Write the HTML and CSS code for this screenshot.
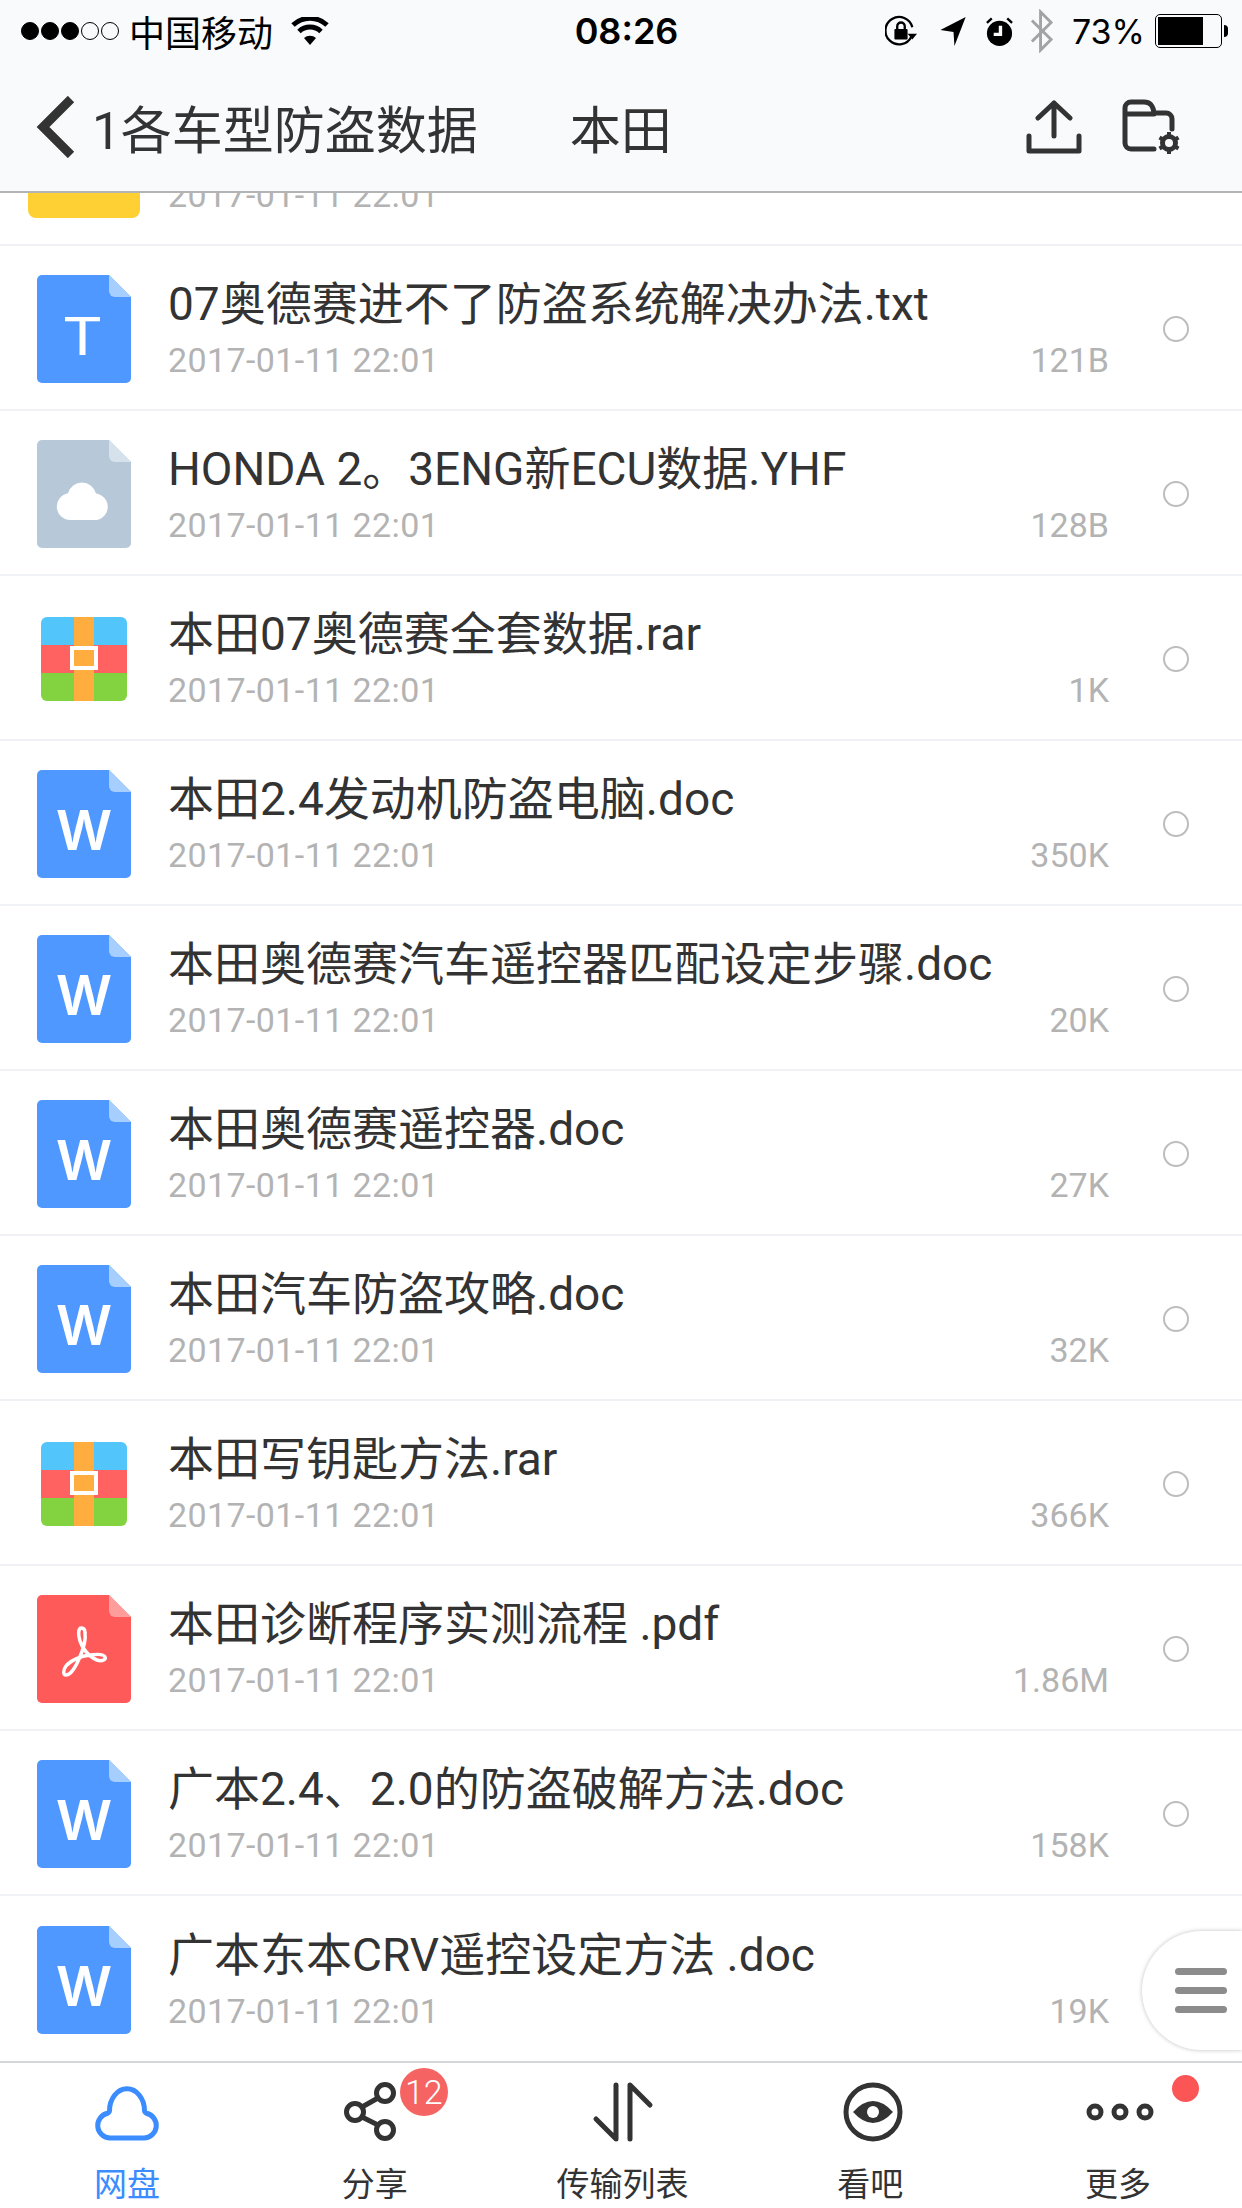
FILE: index.html
```html
<!DOCTYPE html>
<html lang="zh-CN">

<head>
    <meta charset="UTF-8">
    <meta name="viewport" content="width=device-width, initial-scale=1.0">
    <title>本田</title>
    <link rel="stylesheet" href="styles.css">
</head>

<body>
    <!-- shared file icons -->
    <svg class="sprite" xmlns="http://www.w3.org/2000/svg">
        <symbol id="file-word" viewBox="0 0 94 108">
            <path class="sheet-blue" d="M5 0H72L94 22V103a5 5 0 0 1-5 5H5a5 5 0 0 1-5-5V5a5 5 0 0 1 5-5Z"/>
            <path class="fold-blue" d="M72 0L94 22H78a6 6 0 0 1-6-6Z"/>
            <text class="mark-word" x="47" y="80">W</text>
        </symbol>
        <symbol id="file-text" viewBox="0 0 94 108">
            <path class="sheet-blue" d="M5 0H72L94 22V103a5 5 0 0 1-5 5H5a5 5 0 0 1-5-5V5a5 5 0 0 1 5-5Z"/>
            <path class="fold-blue" d="M72 0L94 22H78a6 6 0 0 1-6-6Z"/>
            <text class="mark-text" x="25" y="80" textLength="41" lengthAdjust="spacingAndGlyphs">T</text>
        </symbol>
        <symbol id="file-other" viewBox="0 0 94 108">
            <path class="sheet-grey" d="M5 0H72L94 22V103a5 5 0 0 1-5 5H5a5 5 0 0 1-5-5V5a5 5 0 0 1 5-5Z"/>
            <path class="fold-grey" d="M72 0L94 22H78a6 6 0 0 1-6-6Z"/>
            <path class="mark-fill" d="M33 80a13.500 13.500 0 0 1-2-26.800a14.500 14.500 0 0 1 28 .2a13.500 13.500 0 0 1 1 26.600Z"/>
        </symbol>
        <symbol id="file-pdf" viewBox="0 0 94 108">
            <path class="sheet-red" d="M5 0H72L94 22V103a5 5 0 0 1-5 5H5a5 5 0 0 1-5-5V5a5 5 0 0 1 5-5Z"/>
            <path class="fold-red" d="M72 0L94 22H78a6 6 0 0 1-6-6Z"/>
            <path class="mark-line" d="M44.500 33C41 33 41 40 43 46C45 53 52 62 60 65C66 67 69 64 68 62C67 59 60 59 53 60C44 61 34 65 29 71C26 75 26 80 29 80C33 80 38 73 42 64C46 55 49 44 48 38C48 35 47 33 44.500 33Z"/>
        </symbol>
        <symbol id="file-rar" viewBox="0 0 94 108">
            <path class="rar-blue" d="M4 18a6 6 0 0 1 6-6H84a6 6 0 0 1 6 6V40H4Z"/>
            <rect class="rar-red" x="4" y="40" width="86" height="28"/>
            <path class="rar-green" d="M4 68H90V90a6 6 0 0 1-6 6H10a6 6 0 0 1-6-6Z"/>
            <rect class="rar-belt" x="37" y="12" width="20" height="84"/>
            <rect class="rar-buckle" x="35" y="43" width="24" height="20"/>
        </symbol>
    </svg>

    <div class="phone">
        <header class="top">
            <div class="status">
                <div class="status-left">
                    <span class="signal">
                        <i class="dot on"></i><i class="dot on"></i><i class="dot on"></i><i class="dot"></i><i class="dot"></i>
                    </span>
                    <span>中国移动</span>
                    <svg class="wifi" viewBox="0 0 38 28">
                        <path d="M19 28L13 21a9 9 0 0 1 12 0Z"/>
                        <path class="wifi-arc" d="M8 14.500a16 16 0 0 1 22 0"/>
                        <path class="wifi-arc" d="M2 8a25 25 0 0 1 34 0"/>
                    </svg>
                </div>
                <div class="status-time">08:26</div>
                <div class="status-right">
                    <svg class="st-lock" viewBox="0 0 34 34">
                        <path class="st-line" d="M28 23a14.500 14.500 0 1 1 1-10"/>
                        <path d="M24 20h10l-5 6Z"/>
                        <rect x="10" y="15" width="14" height="11" rx="1"/>
                        <path class="st-line" d="M13 15v-3a4 4 0 0 1 8 0v3"/>
                    </svg>
                    <svg class="st-arrow" viewBox="0 0 28 32">
                        <path d="M27 1L0 15L14 17L15 32Z"/>
                    </svg>
                    <svg class="st-alarm" viewBox="0 0 30 32">
                        <circle cx="15" cy="18" r="13"/>
                        <path class="st-line" d="M2 7L7 2.500M28 7L23 2.500"/>
                        <path class="st-hand" d="M16 10v9H9"/>
                    </svg>
                    <svg class="st-bt" viewBox="0 0 26 46">
                        <path d="M3 12L23 32L12 43V3L23 14L3 34"/>
                    </svg>
                    <span class="st-percent">73%</span>
                    <div class="battery">
                        <div class="battery-shell"><div class="battery-level"></div></div>
                        <div class="battery-tip"></div>
                    </div>
                </div>
            </div>

            <nav class="nav">
                <svg class="nav-back" viewBox="0 0 40 62">
                    <path d="M35 3L7 31L35 59"/>
                </svg>
                <div class="nav-parent">1各车型防盗数据</div>
                <div class="nav-title">本田</div>
                <div class="nav-actions">
                    <svg class="nav-upload" viewBox="0 0 56 54">
                        <path d="M28 36V3M12 18L28 3L44 18M3 36V51H53V36"/>
                    </svg>
                    <svg class="nav-folder" viewBox="0 0 60 56">
                        <path d="M32 50H9a6 6 0 0 1-6-6V9a6 6 0 0 1 6-6H22c6 0 9 3 10 11H44a6 6 0 0 1 6 6V30M3 15H32"/>
                        <circle class="gear" cx="47" cy="44" r="6.500"/>
                        <path class="gear-teeth" d="M47 33v4M47 51v4M37.500 38.500l3.500 2M53 47.500l3.500 2M37.500 49.500l3.500-2M53 40.500l3.500-2"/>
                    </svg>
                </div>
            </nav>
        </header>

        <main class="list">
            <div class="row">
                <div class="icon"><div class="folder"></div></div>
                <div class="row-body">
                    <div class="row-title">&nbsp;</div>
                    <div class="row-meta"><span class="row-date">2017-01-11 22:01</span></div>
                </div>
                <div class="radio"></div>
            </div>

            <div class="row">
                <svg class="icon"><use href="#file-text"/></svg>
                <div class="row-body">
                    <div class="row-title">07奥德赛进不了防盗系统解决办法.txt</div>
                    <div class="row-meta"><span class="row-date">2017-01-11 22:01</span><span>121B</span></div>
                </div>
                <div class="radio"></div>
            </div>

            <div class="row">
                <svg class="icon"><use href="#file-other"/></svg>
                <div class="row-body">
                    <div class="row-title">HONDA 2。3ENG新ECU数据.YHF</div>
                    <div class="row-meta"><span class="row-date">2017-01-11 22:01</span><span>128B</span></div>
                </div>
                <div class="radio"></div>
            </div>

            <div class="row">
                <svg class="icon"><use href="#file-rar"/></svg>
                <div class="row-body">
                    <div class="row-title">本田07奥德赛全套数据.rar</div>
                    <div class="row-meta"><span class="row-date">2017-01-11 22:01</span><span>1K</span></div>
                </div>
                <div class="radio"></div>
            </div>

            <div class="row">
                <svg class="icon"><use href="#file-word"/></svg>
                <div class="row-body">
                    <div class="row-title">本田2.4发动机防盗电脑.doc</div>
                    <div class="row-meta"><span class="row-date">2017-01-11 22:01</span><span>350K</span></div>
                </div>
                <div class="radio"></div>
            </div>

            <div class="row">
                <svg class="icon"><use href="#file-word"/></svg>
                <div class="row-body">
                    <div class="row-title">本田奥德赛汽车遥控器匹配设定步骤.doc</div>
                    <div class="row-meta"><span class="row-date">2017-01-11 22:01</span><span>20K</span></div>
                </div>
                <div class="radio"></div>
            </div>

            <div class="row">
                <svg class="icon"><use href="#file-word"/></svg>
                <div class="row-body">
                    <div class="row-title">本田奥德赛遥控器.doc</div>
                    <div class="row-meta"><span class="row-date">2017-01-11 22:01</span><span>27K</span></div>
                </div>
                <div class="radio"></div>
            </div>

            <div class="row">
                <svg class="icon"><use href="#file-word"/></svg>
                <div class="row-body">
                    <div class="row-title">本田汽车防盗攻略.doc</div>
                    <div class="row-meta"><span class="row-date">2017-01-11 22:01</span><span>32K</span></div>
                </div>
                <div class="radio"></div>
            </div>

            <div class="row">
                <svg class="icon"><use href="#file-rar"/></svg>
                <div class="row-body">
                    <div class="row-title">本田写钥匙方法.rar</div>
                    <div class="row-meta"><span class="row-date">2017-01-11 22:01</span><span>366K</span></div>
                </div>
                <div class="radio"></div>
            </div>

            <div class="row">
                <svg class="icon"><use href="#file-pdf"/></svg>
                <div class="row-body">
                    <div class="row-title">本田诊断程序实测流程 .pdf</div>
                    <div class="row-meta"><span class="row-date">2017-01-11 22:01</span><span>1.86M</span></div>
                </div>
                <div class="radio"></div>
            </div>

            <div class="row">
                <svg class="icon"><use href="#file-word"/></svg>
                <div class="row-body">
                    <div class="row-title">广本2.4、2.0的防盗破解方法.doc</div>
                    <div class="row-meta"><span class="row-date">2017-01-11 22:01</span><span>158K</span></div>
                </div>
                <div class="radio"></div>
            </div>

            <div class="row">
                <svg class="icon"><use href="#file-word"/></svg>
                <div class="row-body">
                    <div class="row-title">广本东本CRV遥控设定方法 .doc</div>
                    <div class="row-meta"><span class="row-date">2017-01-11 22:01</span><span>19K</span></div>
                </div>
                <div class="radio"></div>
            </div>
        </main>

        <div class="float-menu">
            <i></i><i></i><i></i>
        </div>

        <footer class="tabs">
            <div class="tab active">
                <svg class="tab-icon" viewBox="0 0 80 62">
                    <path d="M26 57H23a12.500 12.500 0 0 1-2.500-24.700a3 3 0 0 0 2-2.500a17.500 22 0 0 1 35 0a3 3 0 0 0 2 2.500A12.500 12.500 0 0 1 57 57Z"/>
                </svg>
                <span>网盘</span>
            </div>
            <div class="tab">
                <svg class="tab-icon" viewBox="0 0 80 62">
                    <circle cx="50" cy="12" r="8.500"/>
                    <circle cx="20" cy="31" r="8.500"/>
                    <circle cx="50" cy="49" r="8.500"/>
                    <path d="M27 26L43 17M27 36L43 44"/>
                </svg>
                <span>分享</span>
                <b class="badge">12</b>
            </div>
            <div class="tab">
                <svg class="tab-icon" viewBox="0 0 80 62">
                    <path d="M34 4V58L14 38M48 58V4L68 24"/>
                </svg>
                <span>传输列表</span>
            </div>
            <div class="tab">
                <svg class="tab-icon" viewBox="0 0 80 62">
                    <circle cx="43" cy="31" r="27"/>
                    <path class="eye" d="M23 31Q43 9 63 31Q43 53 23 31Z"/>
                    <circle class="pupil" cx="43" cy="31" r="6"/>
                </svg>
                <span>看吧</span>
            </div>
            <div class="tab">
                <svg class="tab-icon" viewBox="0 0 80 62">
                    <circle cx="17" cy="31" r="6"/>
                    <circle cx="42" cy="31" r="6"/>
                    <circle cx="67" cy="31" r="6"/>
                </svg>
                <span>更多</span>
                <b class="dot-alert"></b>
            </div>
        </footer>
    </div>
</body>

</html>
```

FILE: styles.css
```css
* {
    box-sizing: border-box;
}

body {
    margin: 0;
    background-color: #fff;
    font-family: Roboto, "Noto Sans CJK SC", sans-serif;
    color: #333;
}

.sprite {
    display: none;
}

.phone {
    position: relative;
    display: flex;
    flex-direction: column;
    width: 1242px;
    height: 2208px;
    overflow: hidden;
}

/* status bar + nav */
.top {
    flex: none;
    height: 193px;
    background-color: #f9fafc;
    border-bottom: 2px solid #b4b4b4;
    position: relative;
    z-index: 1;
}

.status {
    display: grid;
    grid-template-columns: 1fr auto 1fr;
    align-items: center;
    height: 62px;
    padding: 0 14px 0 21px;
    font-size: 36px;
    color: #000;
}

.status-left,
.status-right {
    display: flex;
    align-items: center;
}

.status-left {
    gap: 10px;
}

.status-right {
    justify-content: flex-end;
    gap: 18px;
}

.status-time {
    margin-left: 4px;
    font-family: Inter, sans-serif;
    font-size: 36px;
    font-weight: 600;
}

.st-percent {
    font-family: Inter, sans-serif;
    font-size: 34px;
}

.signal {
    display: flex;
    gap: 2px;
}

.dot {
    width: 18px;
    height: 18px;
    border: 1.500px solid #000;
    border-radius: 50%;
}

.dot.on {
    background-color: #000;
}

.wifi {
    width: 38px;
    height: 28px;
    margin-left: 8px;
}

.wifi-arc {
    fill: none;
    stroke: #000;
    stroke-width: 5;
}

.st-lock {
    width: 32px;
    height: 32px;
    margin-right: 5px;
}

.st-line {
    fill: none;
    stroke: #000;
    stroke-width: 2.500;
}

.st-arrow {
    width: 27px;
    height: 30px;
}

.st-alarm {
    width: 29px;
    height: 31px;
    margin-right: -3px;
}

.st-hand {
    fill: none;
    stroke: #f9fafc;
    stroke-width: 3.500;
}

.st-bt {
    width: 25px;
    height: 44px;
    fill: none;
    stroke: #a3a3a3;
    stroke-width: 3;
}

.battery {
    display: flex;
    align-items: center;
    margin-left: -8px;
}

.battery-shell {
    width: 67px;
    height: 34px;
    padding: 2px;
    border: 1.500px solid #000;
    border-radius: 5px;
}

.battery-level {
    width: 73%;
    height: 100%;
    background-color: #000;
}

.battery-tip {
    width: 4px;
    height: 12px;
    margin-left: 2px;
    background-color: #000;
    border-radius: 0 4px 4px 0;
}

.nav {
    display: flex;
    align-items: center;
    height: 129px;
    padding: 0 60px 0 36px;
}

.nav-back {
    width: 40px;
    height: 62px;
    fill: none;
    stroke: #333;
    stroke-width: 9;
}

.nav-parent {
    margin-left: 16px;
    font-size: 51px;
}

.nav-title {
    margin-left: 92px;
    font-size: 51px;
}

.nav-actions {
    display: flex;
    align-items: center;
    gap: 40px;
    margin-left: auto;
}

.nav-upload {
    width: 56px;
    height: 54px;
    fill: none;
    stroke: #333;
    stroke-width: 5;
    stroke-linecap: round;
    stroke-linejoin: round;
}

.nav-folder {
    width: 60px;
    height: 56px;
    fill: none;
    stroke: #333;
    stroke-width: 5;
    stroke-linecap: round;
}

.gear {
    stroke-width: 5;
}

.gear-teeth {
    stroke-width: 4;
    stroke-linecap: butt;
}

/* file list, pinned to the bottom so the first row is cut by the nav */
.list {
    flex: 1;
    min-height: 0;
    display: flex;
    flex-direction: column;
    justify-content: flex-end;
    overflow: hidden;
}

.row {
    flex: none;
    display: flex;
    align-items: center;
    height: 165px;
    padding: 2px 0 0 37px;
    border-bottom: 2px solid #eff1f4;
}

.row:last-child {
    border-bottom: none;
}

.icon {
    flex: none;
    width: 94px;
    height: 108px;
}

.folder {
    width: 112px;
    height: 90px;
    margin: 18px 0 0 -9px;
    background-color: #ffd033;
    border-radius: 8px;
}

.row-body {
    flex: none;
    display: flex;
    flex-direction: column;
    width: 941px;
    margin-left: 37px;
}

.row-title {
    font-size: 46px;
    line-height: 56px;
    white-space: nowrap;
}

.row-meta {
    display: flex;
    justify-content: space-between;
    margin-top: 6px;
    font-size: 34px;
    line-height: 44px;
    color: #b3b3b3;
}

.row-date {
    letter-spacing: 0.4px;
}

.radio {
    width: 26px;
    height: 26px;
    margin-left: 54px;
    border: 2px solid #bdbdbd;
    border-radius: 50%;
}

/* file icon colours */
.sheet-blue { fill: #4e98ff; }
.fold-blue { fill: #a6cfff; }
.sheet-grey { fill: #b7c9d8; }
.fold-grey { fill: #d5e2ec; }
.sheet-red { fill: #ff5a5a; }
.fold-red { fill: #ff9c9c; }
.rar-blue { fill: #52c5fb; }
.rar-red { fill: #ff6260; }
.rar-green { fill: #82d33f; }
.rar-belt { fill: #ffad3f; }
.rar-buckle { fill: #ffad3f; stroke: #fff; stroke-width: 4; }
.mark-fill { fill: #fff; }
.mark-line { fill: none; stroke: #fff; stroke-width: 3.500; }

.mark-word {
    fill: #fff;
    font-family: Inter, sans-serif;
    font-size: 55px;
    font-weight: 600;
    text-anchor: middle;
}

.mark-text {
    fill: #fff;
    font-family: Inter, sans-serif;
    font-size: 52px;
    font-weight: 400;
}

/* floating handle */
.float-menu {
    position: absolute;
    top: 1931px;
    right: 0;
    display: flex;
    flex-direction: column;
    justify-content: center;
    gap: 12px;
    width: 100px;
    height: 119px;
    padding-left: 33px;
    background-color: #fff;
    border-radius: 60px 0 0 60px;
    box-shadow: 0 0 4px rgba(0, 0, 0, 0.25);
}

.float-menu i {
    width: 52px;
    height: 7px;
    background-color: #8c8c8c;
    border-radius: 4px;
}

/* tab bar */
.tabs {
    flex: none;
    display: grid;
    grid-template-columns: repeat(5, 1fr);
    height: 147px;
    padding-left: 3px;
    background-color: #fff;
    border-top: 2px solid #d3d6da;
}

.tab {
    position: relative;
    display: flex;
    flex-direction: column;
    align-items: center;
    padding-top: 18px;
    font-size: 33px;
    line-height: 44px;
}

.tab-icon {
    width: 80px;
    height: 62px;
    margin-bottom: 20px;
    fill: none;
    stroke: #333;
    stroke-width: 5;
    stroke-linecap: round;
    stroke-linejoin: round;
}

.tab.active {
    color: #3b8cff;
}

.active .tab-icon {
    stroke: #3b8cff;
}

.tab-icon .eye {
    fill: #333;
    stroke: none;
}

.tab-icon .pupil {
    fill: #fff;
    stroke: none;
}

.badge {
    position: absolute;
    top: 5px;
    left: 149px;
    width: 48px;
    height: 48px;
    border-radius: 50%;
    background-color: #f56363;
    color: #fff;
    font-size: 34px;
    font-weight: 300;
    line-height: 48px;
    text-align: center;
}

.dot-alert {
    position: absolute;
    top: 12px;
    left: 178px;
    width: 27px;
    height: 27px;
    border-radius: 50%;
    background-color: #fb5555;
}
```
